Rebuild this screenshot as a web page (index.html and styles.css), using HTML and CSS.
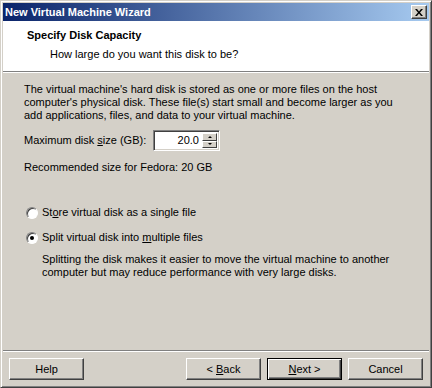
FILE: index.html
```html
<!DOCTYPE html>
<html>

<head>
    <title>New Virtual Machine Wizard</title>
    <link rel="stylesheet" href="styles.css">
</head>

<body>
    <div class="window">
        <!-- title bar -->
        <div class="titlebar">
            <span class="title">New Virtual Machine Wizard</span>
            <span class="close">
                <svg width="8" height="7" viewBox="0 0 8 7">
                    <path d="M0 0h2l2 2.5 2-2.5h2L5 3.5 8 7H6L4 4.5 2 7H0l3-3.5z" fill="#000" />
                </svg>
            </span>
        </div>

        <!-- page header -->
        <div class="header">
            <div class="header-title">Specify Disk Capacity</div>
            <div class="header-sub">How large do you want this disk to be?</div>
        </div>

        <div class="content">
            <p class="intro">The virtual machine's hard disk is stored as one or more files on the host<br>
                computer's physical disk. These file(s) start small and become larger as you<br>
                add applications, files, and data to your virtual machine.</p>

            <div class="size-row">
                <span class="size-label">Maximum disk <u>s</u>ize (GB):</span>
                <div class="spin">
                    <span class="spin-value">20.0</span>
                    <div class="spin-buttons">
                        <span class="spin-btn"><span class="arrow-up"></span></span>
                        <span class="spin-btn"><span class="arrow-down"></span></span>
                    </div>
                </div>
            </div>

            <p class="recommend">Recommended size for Fedora: 20 GB</p>

            <div class="options">
                <div class="radio-row">
                    <span class="radio"></span>
                    <span>St<u>o</u>re virtual disk as a single file</span>
                </div>
                <div class="radio-row">
                    <span class="radio checked"></span>
                    <span>Split virtual disk into <u>m</u>ultiple files</span>
                </div>
                <p class="note">Splitting the disk makes it easier to move the virtual machine to another<br>
                    computer but may reduce performance with very large disks.</p>
            </div>
        </div>

        <!-- buttons -->
        <div class="footer">
            <button class="btn">Help</button>
            <div class="nav-buttons">
                <button class="btn">&lt; <u>B</u>ack</button>
                <button class="btn default"><u>N</u>ext &gt;</button>
                <button class="btn">Cancel</button>
            </div>
        </div>
    </div>
</body>

</html>
```

FILE: styles.css
```css
body {
    margin: 0;
    font-family: "Liberation Sans", Arial, sans-serif;
    font-size: 11px;
    color: #000;
}

.window {
    width: 432px;
    height: 388px;
    box-sizing: border-box;
    display: flex;
    flex-direction: column;
    background: #d4d0c8;
    border: 1px solid;
    border-color: #d4d0c8 #404040 #404040 #d4d0c8;
    box-shadow: inset 1px 1px #fff, inset -1px -1px #808080;
    padding: 2px;
}

.titlebar {
    height: 18px;
    display: flex;
    align-items: center;
    justify-content: space-between;
    padding: 0 2px 0 2px;
    background: linear-gradient(to right, #0a246a, #a6caf0);
}

.title {
    color: #fff;
    font-weight: bold;
}

.close {
    width: 16px;
    height: 14px;
    box-sizing: border-box;
    display: flex;
    align-items: center;
    justify-content: center;
    background: #d4d0c8;
    border: 1px solid;
    border-color: #fff #404040 #404040 #fff;
    box-shadow: inset -1px -1px #808080;
}

.header {
    height: 51px;
    background: #fff;
    border-bottom: 1px solid #808080;
    box-shadow: 0 1px #fff;
    padding-left: 24px;
    box-sizing: border-box;
    padding-top: 8px;
}

.header-title {
    font-weight: bold;
    line-height: 13px;
}

.header-sub {
    line-height: 13px;
    margin-top: 6px;
    padding-left: 23px;
}

.content {
    flex: 1;
    padding: 11px 0 0 21px;
    line-height: 13px;
}

.intro {
    margin: 0;
}

.size-row {
    display: flex;
    align-items: center;
    margin-top: 8px;
}

.size-label {
    width: 129px;
}

.spin {
    width: 67px;
    height: 21px;
    box-sizing: border-box;
    display: flex;
    align-items: center;
    background: #fff;
    border: 1px solid;
    border-color: #808080 #fff #fff #808080;
    box-shadow: inset 1px 1px #404040, inset -1px -1px #d4d0c8;
    padding: 2px;
}

.spin-value {
    flex: 1;
    text-align: right;
    padding-right: 3px;
}

.spin-buttons {
    display: flex;
    flex-direction: column;
    width: 15px;
    height: 15px;
}

.spin-btn {
    flex: 1;
    display: flex;
    align-items: center;
    justify-content: center;
    background: #d4d0c8;
    box-sizing: border-box;
    border: 1px solid;
    border-color: #fff #404040 #404040 #fff;
}

.arrow-up,
.arrow-down {
    width: 0;
    height: 0;
    border-left: 2px solid transparent;
    border-right: 2px solid transparent;
}

.arrow-up {
    border-bottom: 2px solid #000;
}

.arrow-down {
    border-top: 2px solid #000;
}

.recommend {
    margin: 10px 0 0 0;
}

.options {
    margin-top: 32px;
}

.radio-row {
    display: flex;
    align-items: center;
    gap: 4px;
    height: 13px;
    margin-bottom: 12px;
    padding-left: 2px;
}

.radio-row + .radio-row {
    margin-top: 1px;
}

.radio {
    width: 12px;
    height: 12px;
    box-sizing: border-box;
    border-radius: 50%;
    border: 1px solid;
    border-color: #808080 #fff #fff #808080;
    background: #fff;
    box-shadow: inset 1px 1px #404040;
    display: flex;
    align-items: center;
    justify-content: center;
}

.radio.checked::after {
    content: "";
    width: 4px;
    height: 4px;
    border-radius: 50%;
    background: #000;
}

.note {
    margin: -3px 0 0 18px;
}

.footer {
    height: 35px;
    box-sizing: border-box;
    display: flex;
    justify-content: space-between;
    align-items: flex-start;
    border-top: 1px solid #808080;
    box-shadow: inset 0 1px #fff;
    padding: 7px 6px 0 6px;
}

.nav-buttons {
    display: flex;
    gap: 6px;
}

.btn {
    width: 75px;
    height: 22px;
    box-sizing: border-box;
    font-family: "Liberation Sans", Arial, sans-serif;
    font-size: 11px;
    color: #000;
    background: #d4d0c8;
    border: 1px solid;
    border-color: #fff #404040 #404040 #fff;
    box-shadow: inset -1px -1px #808080;
    padding: 0;
}

.btn.default {
    border: 1px solid #000;
    box-shadow: inset 1px 1px #fff, inset -1px -1px #404040, inset -2px -2px #808080;
}
```
